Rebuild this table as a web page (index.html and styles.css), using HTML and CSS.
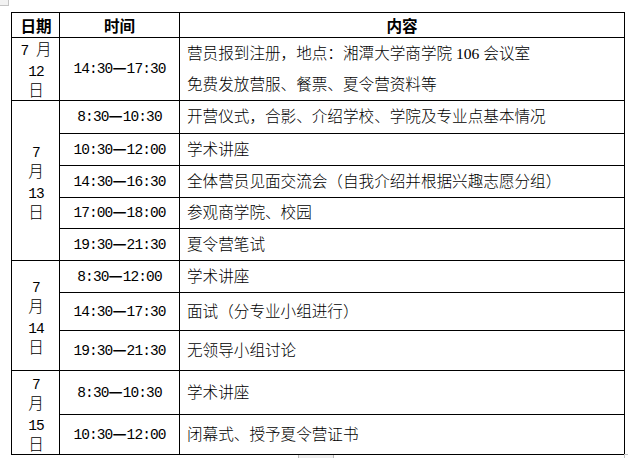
FILE: index.html
```html
<!DOCTYPE html>
<html lang="zh-CN">
<head>
<meta charset="utf-8">
<title>夏令营日程</title>
<link rel="stylesheet" href="styles.css">
</head>
<body>
<div class="page">
  <div class="move-handle"></div>
  <table class="schedule">
    <colgroup>
      <col class="c-date">
      <col class="c-time">
      <col class="c-content">
    </colgroup>
    <tr class="h25 head">
      <td class="date">日期</td>
      <td class="time">时间</td>
      <td class="center">内容</td>
    </tr>
    <tr class="h63">
      <td class="date"><span class="dl"><span class="n">7 </span>月</span><span class="dl"><span class="n">12</span></span><span class="dl">日</span></td>
      <td class="time">14:30<span class="dash">—</span>17:30</td>
      <td class="content">
        <div class="line31">营员报到注册，地点：湘潭大学商学院 106 会议室</div>
        <div class="line31">免费发放营服、餐票、夏令营资料等</div>
      </td>
    </tr>
    <tr class="h33">
      <td class="date" rowspan="5"><span class="dl"><span class="n">7</span></span><span class="dl">月</span><span class="dl"><span class="n">13</span></span><span class="dl">日</span></td>
      <td class="time">8:30<span class="dash">—</span>10:30</td>
      <td class="content">开营仪式，合影、介绍学校、学院及专业点基本情况</td>
    </tr>
    <tr class="h32">
      <td class="time">10:30<span class="dash">—</span>12:00</td>
      <td class="content">学术讲座</td>
    </tr>
    <tr class="h32">
      <td class="time">14:30<span class="dash">—</span>16:30</td>
      <td class="content">全体营员见面交流会（自我介绍并根据兴趣志愿分组）</td>
    </tr>
    <tr class="h31">
      <td class="time">17:00<span class="dash">—</span>18:00</td>
      <td class="content">参观商学院、校园</td>
    </tr>
    <tr class="h32">
      <td class="time">19:30<span class="dash">—</span>21:30</td>
      <td class="content">夏令营笔试</td>
    </tr>
    <tr class="h32">
      <td class="date" rowspan="3"><span class="dl"><span class="n">7</span></span><span class="dl">月</span><span class="dl"><span class="n">14</span></span><span class="dl">日</span></td>
      <td class="time">8:30<span class="dash">—</span>12:00</td>
      <td class="content">学术讲座</td>
    </tr>
    <tr class="h38">
      <td class="time">14:30<span class="dash">—</span>17:30</td>
      <td class="content">面试（分专业小组进行）</td>
    </tr>
    <tr class="h40">
      <td class="time">19:30<span class="dash">—</span>21:30</td>
      <td class="content">无领导小组讨论</td>
    </tr>
    <tr class="h44">
      <td class="date" rowspan="2"><span class="dl"><span class="n">7</span></span><span class="dl">月</span><span class="dl"><span class="n">15</span></span><span class="dl">日</span></td>
      <td class="time">8:30<span class="dash">—</span>10:30</td>
      <td class="content">学术讲座</td>
    </tr>
    <tr class="h40">
      <td class="time">10:30<span class="dash">—</span>12:00</td>
      <td class="content">闭幕式、授予夏令营证书</td>
    </tr>
  </table>
  <div class="resize-mark"></div>
  <div class="bottom-bar"></div>
</div>
</body>
</html>
```

FILE: styles.css
```css
html, body {
  margin: 0;
  padding: 0;
  background: #ffffff;
}

body {
  font-family: "Liberation Serif", "Noto Sans CJK SC", serif;
  font-size: 15.6px;
  font-weight: 300;
  color: #000000;
}

.page {
  position: relative;
  width: 628px;
  height: 458px;
  padding: 12px 0 0 11px;
  box-sizing: border-box;
  overflow: hidden;
}

.schedule {
  border-collapse: separate;
  border-spacing: 0;
  table-layout: fixed;
  width: 614px;
  box-sizing: border-box;
  border-left: 1px solid #000;
  border-top: 1px solid #000;
}

.c-date { width: 48px; }
.c-time { width: 120px; }
.c-content { width: 445px; }

.schedule td {
  box-sizing: border-box;
  padding: 0;
  border-right: 1px solid #000;
  border-bottom: 1px solid #000;
  vertical-align: middle;
  white-space: nowrap;
  overflow: hidden;
}

.h25 { height: 25px; }
.h31 { height: 31px; }
.h32 { height: 32px; }
.h33 { height: 33px; }
.h38 { height: 38px; }
.h40 { height: 40px; }
.h44 { height: 44px; }
.h63 { height: 63px; }

.head td {
  font-family: "Noto Sans CJK SC", sans-serif;
  font-weight: 700;
  font-size: 15.6px;
  text-align: center;
  line-height: 20px;
  letter-spacing: 0;
}

.date {
  text-align: center;
  font-family: "Noto Sans CJK SC", sans-serif;
  padding-left: 1px !important;
}

.dl {
  display: block;
  height: 20.5px;
  line-height: 20.5px;
}

.n {
  font-family: "Liberation Mono", monospace;
  font-size: 14.5px;
  font-weight: 400;
  letter-spacing: -0.9px;
  line-height: 1;
  white-space: pre;
}

.time {
  text-align: center;
  font-family: "Liberation Mono", monospace;
  font-size: 14.5px;
  font-weight: 400;
  letter-spacing: -0.9px;
  line-height: 20px;
}

.dash {
  font-family: "Noto Sans CJK SC", sans-serif;
  font-size: 15.6px;
  font-weight: 700;
  letter-spacing: 0;
  line-height: 1;
}

.content {
  padding-left: 7px !important;
  text-align: left;
  line-height: 20px;
}

.center {
  text-align: center;
}

.line31 {
  height: 31px;
  line-height: 31px;
}

.move-handle {
  position: absolute;
  left: -3px;
  top: -6px;
  width: 10px;
  height: 10px;
  border: 1px solid #c4c4c4;
  background: #f2f2f2;
}

.resize-mark {
  position: absolute;
  left: 624px;
  top: 454px;
  width: 6px;
  height: 6px;
  border-left: 1px solid #c0c0c0;
  border-top: 1px solid #c0c0c0;
}

.bottom-bar {
  position: absolute;
  left: 298px;
  top: 455px;
  width: 34px;
  height: 4px;
  background: #eeeeee;
  border-left: 1px solid #b8b8b8;
  border-right: 1px solid #b8b8b8;
}
```
